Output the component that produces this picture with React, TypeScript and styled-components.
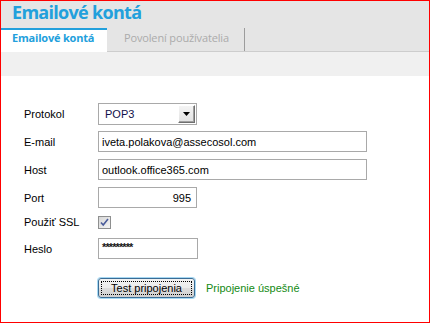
import React from 'react'
import styled, { createGlobalStyle } from 'styled-components'

const GlobalStyle = createGlobalStyle`
  html, body { margin: 0; padding: 0; background: #fff; }
`

const blue = '#22a0dc'
const uiFont = `"Liberation Sans", Arial, sans-serif`

const Frame = styled.div`
  width: 430px;
  height: 323px;
  box-sizing: border-box;
  border: 1px solid #ff0000;
  overflow: hidden;
  background: #fff;
  font-family: ${uiFont};
  font-size: 11px;
  color: #000;
`

const Header = styled.div`
  background: #e5e5e5;
`

const Title = styled.div`
  height: 27px;
  padding-left: 11px;
  font-family: "Open Sans", sans-serif;
  font-weight: 700;
  font-size: 18px;
  line-height: 22px;
  color: ${blue};
  letter-spacing: -0.7px;
`

const TabBar = styled.div`
  display: flex;
  height: 23px;
  border-bottom: 1px solid #cdcdcd;
`

const Tab = styled.div<{ active?: boolean }>`
  box-sizing: border-box;
  height: 24px;
  font-family: "Open Sans", sans-serif;
  font-size: 11px;
  line-height: 15px;
  white-space: nowrap;
  ${p => p.active ? `
    width: 106px;
    margin-bottom: -1px;
    padding-left: 11px;
    background: #fff;
    border-top: 2px solid ${blue};
    color: ${blue};
    font-weight: 700;
    letter-spacing: -0.2px;
  ` : `
    padding: 2px 15px 0 17px;
    border-right: 1px solid #9c9c9c;
    height: 23px;
    color: #ababab;
    letter-spacing: -0.15px;
  `}
`

const Band = styled.div`
  height: 24px;
  background: #f0f0f0;
`

const Form = styled.div`
  display: flex;
  flex-direction: column;
  padding: 27px 0 0 23px;
`

const Row = styled.div<{ gap: number; h: number }>`
  display: flex;
  align-items: center;
  margin-top: ${p => p.gap}px;
  height: ${p => p.h}px;
`

const Label = styled.div`
  width: 74px;
  flex: none;
`

const Field = styled.div<{ w: number; right?: boolean }>`
  box-sizing: border-box;
  width: ${p => p.w}px;
  height: 100%;
  border: 1px solid #a9a9a9;
  display: flex;
  align-items: center;
  justify-content: ${p => p.right ? 'flex-end' : 'flex-start'};
  padding: 0 ${p => p.right ? '5px' : '0'} 0 ${p => p.right ? '0' : '3px'};
  white-space: nowrap;
`

const Select = styled(Field)`
  padding: 1px 1px 1px 6px;
  justify-content: space-between;
  color: #10104a;
`

const DropButton = styled.div`
  box-sizing: border-box;
  width: 17px;
  height: 100%;
  background: linear-gradient(#f4f4f4, #e2e2e2);
  border: 1px solid;
  border-color: #ffffff #6f6f6f #6f6f6f #ffffff;
  box-shadow: inset -1px -1px 0 #a0a0a0;
  display: flex;
  align-items: center;
  justify-content: center;
`

const Password = styled.span`
  letter-spacing: -0.9px;
  font-size: 11px;
  font-weight: 700;
  color: #1a1a1a;
  margin-top: -3px;
`

const Button = styled.button`
  position: relative;
  box-sizing: border-box;
  width: 97px;
  height: 20px;
  margin: 0;
  padding: 0;
  border: 1px solid #3a6c95;
  border-radius: 3px;
  box-shadow: 0 0 0 1px #a6d8f3;
  background: linear-gradient(#f2f2f2 0%, #ebebeb 50%, #dddddd 51%, #cfcfcf 100%);
  font-family: ${uiFont};
  font-size: 11px;
  color: #000;

  &::after {
    content: '';
    position: absolute;
    inset: 2px;
    border: 1px dotted #000;
  }
`

const Success = styled.span`
  margin-left: 11px;
  color: #138a13;
  font-size: 11px;
`

function Checkbox() {
  return (
    <svg width="13" height="13" viewBox="0 0 13 13">
      <defs>
        <linearGradient id="cb" x1="0" y1="0" x2="1" y2="1">
          <stop offset="0" stopColor="#d6d6d6" />
          <stop offset="1" stopColor="#f6f6f6" />
        </linearGradient>
      </defs>
      <rect x="0.5" y="0.5" width="12" height="12" fill="url(#cb)" stroke="#8e8f8f" />
      <path d="M3 6.5 L5.2 9 L10 3" fill="none" stroke="#4a5c9a" strokeWidth="1.6" />
    </svg>
  )
}

export default function App() {
  return (
    <Frame>
      <GlobalStyle />
      <Header>
        <Title>Emailové kontá</Title>
        <TabBar>
          <Tab active>Emailové kontá</Tab>
          <Tab>Povolení používatelia</Tab>
        </TabBar>
      </Header>
      <Band />
      <Form>
        <Row gap={0} h={22}>
          <Label>Protokol</Label>
          <Select w={99}>
            <span>POP3</span>
            <DropButton>
              <svg width="7" height="4" viewBox="0 0 7 4"><path d="M0 0h7L3.5 4z" fill="#000" /></svg>
            </DropButton>
          </Select>
        </Row>
        <Row gap={6} h={21}>
          <Label>E-mail</Label>
          <Field w={269}>iveta.polakova@assecosol.com</Field>
        </Row>
        <Row gap={7} h={21}>
          <Label>Host</Label>
          <Field w={269}>outlook.office365.com</Field>
        </Row>
        <Row gap={7} h={21}>
          <Label>Port</Label>
          <Field w={99} right>995</Field>
        </Row>
        <Row gap={7} h={14}>
          <Label>Použiť SSL</Label>
          <Checkbox />
        </Row>
        <Row gap={9} h={21}>
          <Label>Heslo</Label>
          <Field w={100}><Password>*********</Password></Field>
        </Row>
        <Row gap={19} h={20}>
          <Label />
          <Button>Test pripojenia</Button>
          <Success>Pripojenie úspešné</Success>
        </Row>
      </Form>
    </Frame>
  )
}
